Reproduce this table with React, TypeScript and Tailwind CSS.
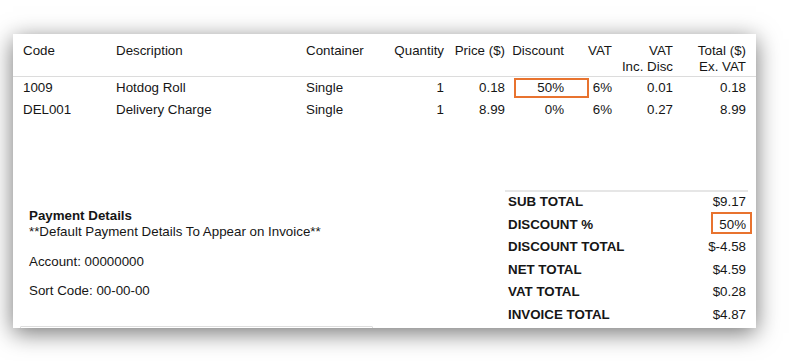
const lines = [
  { code: "1009", desc: "Hotdog Roll", container: "Single", qty: "1", price: "0.18", discount: "50%", vat: "6%", vatInc: "0.01", total: "0.18", flagged: true },
  { code: "DEL001", desc: "Delivery Charge", container: "Single", qty: "1", price: "8.99", discount: "0%", vat: "6%", vatInc: "0.27", total: "8.99", flagged: false },
];

const totals = [
  { label: "SUB TOTAL", value: "$9.17" },
  { label: "DISCOUNT %", value: "50%", flagged: true },
  { label: "DISCOUNT TOTAL", value: "$-4.58" },
  { label: "NET TOTAL", value: "$4.59" },
  { label: "VAT TOTAL", value: "$0.28" },
  { label: "INVOICE TOTAL", value: "$4.87" },
];

const cols = "grid grid-cols-[93px_190px_84px_54px_61px_59px_48px_61px_73px]";

export default function App() {
  return (
    <div className="min-h-[361px] bg-white pt-[34px] pl-[13px] font-['Liberation_Sans',Arial,sans-serif] text-[13.33px] leading-4 text-[#161616]">
      <div className="w-[743px] h-[294px] overflow-hidden bg-white shadow-[0_5px_22px_rgba(0,0,0,0.55)]">
        {/* line items */}
        <div className={`${cols} px-[10px] pt-[9px] pb-[1px] border-b border-[#dcdcdc]`}>
          <div>Code</div>
          <div>Description</div>
          <div>Container</div>
          <div className="text-right">Quantity</div>
          <div className="text-right">Price ($)</div>
          <div className="text-right">Discount</div>
          <div className="text-right">VAT</div>
          <div className="text-right">VAT<br />Inc. Disc</div>
          <div className="text-right">Total ($)<br />Ex. VAT</div>
        </div>
        {lines.map(l => (
          <div key={l.code} className={`${cols} px-[10px] h-[22px] items-center`}>
            <div>{l.code}</div>
            <div>{l.desc}</div>
            <div>{l.container}</div>
            <div className="text-right">{l.qty}</div>
            <div className="text-right">{l.price}</div>
            <div className="relative text-right">
              {l.discount}
              {l.flagged && (
                <span className="absolute left-[9px] top-[-2px] w-[75px] h-[20px] border-2 border-[#e8732f]" />
              )}
            </div>
            <div className="text-right">{l.vat}</div>
            <div className="text-right">{l.vatInc}</div>
            <div className="text-right">{l.total}</div>
          </div>
        ))}

        {/* payment + totals */}
        <div className="flex items-start mt-[69px]">
          <div className="ml-[7px] w-[353px] mt-[18px]">
            <div className="pl-[9px]">
              <div className="font-bold">Payment Details</div>
              <div>**Default Payment Details To Appear on Invoice**</div>
              <div className="mt-[14px]">Account: 00000000</div>
              <div className="mt-[13px]">Sort Code: 00-00-00</div>
            </div>
            <div className="mt-[27px] h-10 border border-[#dedede] rounded-[1px]" />
          </div>
          <div className="ml-auto mr-[8px] w-[243px] border-t-2 border-[#e6e6e6] pt-[2px]">
            {totals.map(t => (
              <div key={t.label} className="flex justify-between h-[22.6px] pl-[3px] pr-[2px]">
                <span className="font-bold">{t.label}</span>
                <span className="relative">
                  {t.value}
                  {t.flagged && (
                    <span className="absolute right-[-6px] top-[-4.6px] w-[41px] h-[22px] border-2 border-[#e8732f]" />
                  )}
                </span>
              </div>
            ))}
          </div>
        </div>
      </div>
    </div>
  );
}
